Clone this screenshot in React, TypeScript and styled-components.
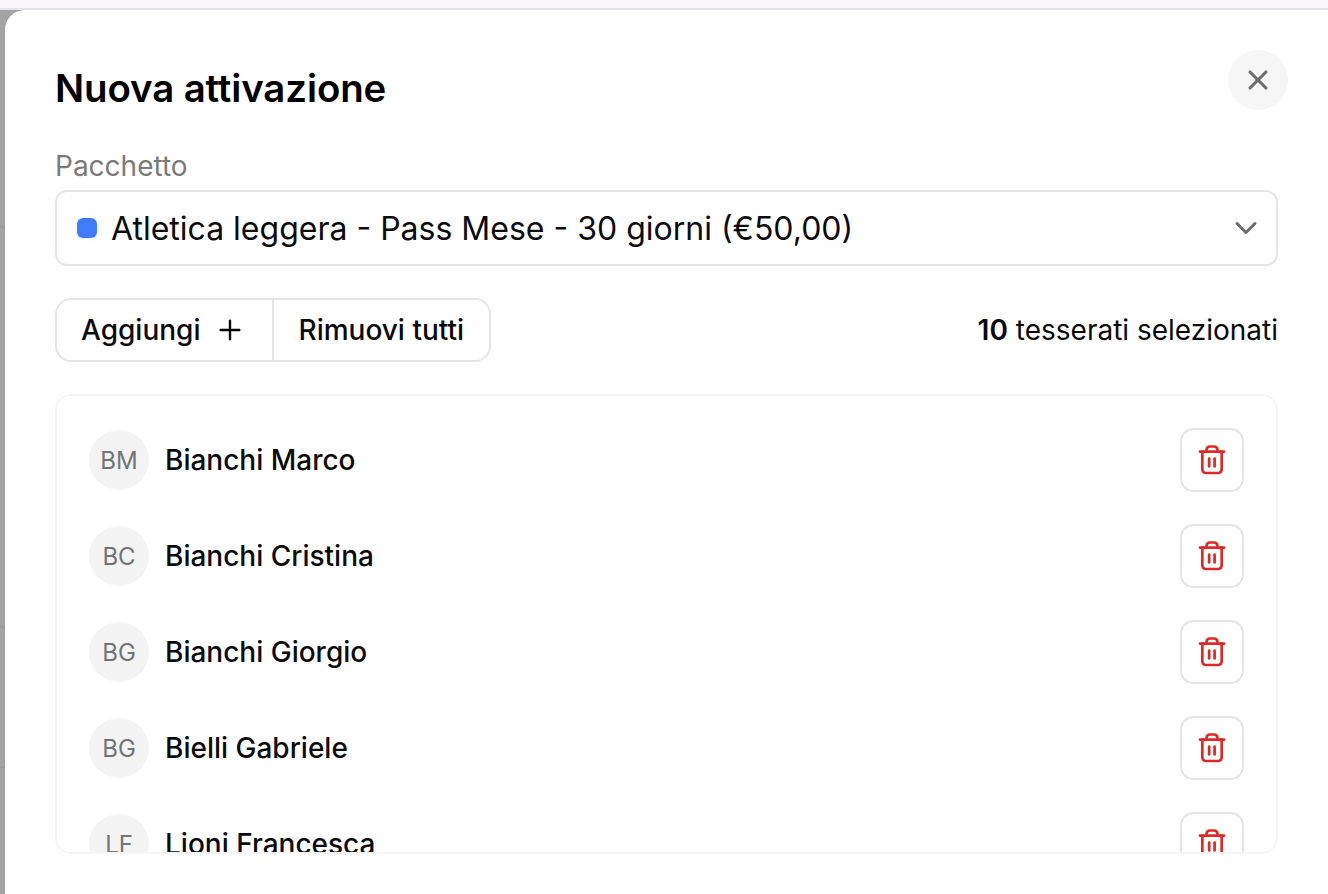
import React from "react";
import styled, { createGlobalStyle } from "styled-components";
import { ChevronDown, Plus, X } from "lucide-react";

const members = [
  { initials: "BM", name: "Bianchi Marco" },
  { initials: "BC", name: "Bianchi Cristina" },
  { initials: "BG", name: "Bianchi Giorgio" },
  { initials: "BG", name: "Bielli Gabriele" },
  { initials: "LF", name: "Lioni Francesca" },
];

const GlobalStyle = createGlobalStyle`
  html, body {
    margin: 0;
    height: 100%;
    overflow: hidden;
    background: #a3a3a3;
    font-family: Inter, "Liberation Sans", sans-serif;
    color: #0a0a0a;
  }
`;

const Page = styled.div`
  height: 894px;
  display: flex;
  flex-direction: column;
  overflow: hidden;
`;

const TopStrip = styled.div`
  height: 8px;
  background: #fbf5fd;
  border-bottom: 2px solid #e6e1e8;
  flex: none;
`;

/* the dimmed table behind the modal only shows as faint row lines */
const Backdrop = styled.div`
  flex: 1;
  display: flex;
  padding-left: 5px;
  min-height: 0;
  background:
    linear-gradient(#999, #999) 0 216px / 100% 2px no-repeat,
    linear-gradient(#999, #999) 0 616px / 100% 2px no-repeat,
    linear-gradient(#999, #999) 0 756px / 100% 2px no-repeat,
    #a3a3a3;
`;

const Modal = styled.div`
  position: relative;
  flex: 1;
  background: #fff;
  border-radius: 20px 0 0 0;
  padding: 50px 50px 0;
  overflow: hidden;
`;

const Title = styled.h2`
  margin: 0;
  font-size: 38.4px;
  line-height: 56px;
  font-weight: 600;
  letter-spacing: -0.1px;
  color: #000;
`;

const CloseButton = styled.button`
  position: absolute;
  top: 40px;
  right: 40px;
  width: 60px;
  height: 60px;
  border: 0;
  border-radius: 50%;
  background: #f5f5f5;
  color: #6b6b6b;
  display: flex;
  align-items: center;
  justify-content: center;
  padding: 0;
`;

const Label = styled.div`
  margin-top: 32px;
  font-size: 28px;
  line-height: 36px;
  color: #7a7a7a;
`;

const Select = styled.div`
  margin-top: 6px;
  height: 76px;
  box-sizing: border-box;
  border: 2px solid #e5e5e5;
  border-radius: 12px;
  display: flex;
  align-items: center;
  padding: 0 12px 0 20px;
  font-size: 32px;
  color: #0a0a0a;
`;

const Dot = styled.span`
  width: 20px;
  height: 20px;
  border-radius: 6px;
  background: #3f7bfa;
  margin-right: 14px;
  box-shadow: 0 1px 3px rgba(63, 123, 250, 0.15);
  flex: none;
`;

const SelectText = styled.span`
  flex: 1;
`;

const Toolbar = styled.div`
  margin-top: 32px;
  display: flex;
  align-items: center;
  justify-content: space-between;
`;

const ButtonGroup = styled.div`
  display: flex;
  height: 64px;
  box-sizing: border-box;
  border: 2px solid #e5e5e5;
  border-radius: 16px;
`;

const GroupButton = styled.div<{ $divider?: boolean }>`
  display: flex;
  align-items: center;
  gap: 14px;
  padding: ${(p) => (p.$divider ? "0 25px 0 24px" : "0 26px 0 24px")};
  font-size: 28px;
  font-weight: 450;
  color: #0a0a0a;
  border-left: ${(p) => (p.$divider ? "2px solid #e5e5e5" : "0")};
`;

const Count = styled.div`
  font-size: 28px;
  color: #0a0a0a;
  b {
    font-weight: 600;
  }
`;

const ListCard = styled.div`
  margin-top: 32px;
  height: 460px;
  box-sizing: border-box;
  border: 2px solid #f5f5f5;
  border-radius: 16px;
  overflow: hidden;
  padding: 16px 32px 0;
`;

const Row = styled.div`
  height: 96px;
  display: flex;
  align-items: center;
  gap: 16px;
`;

const Avatar = styled.div`
  width: 60px;
  height: 60px;
  border-radius: 50%;
  background: #f3f3f3;
  color: #737373;
  font-size: 24px;
  display: flex;
  align-items: center;
  justify-content: center;
  flex: none;
`;

const Name = styled.div`
  flex: 1;
  font-size: 28px;
  font-weight: 450;
  color: #0a0a0a;
`;

const DeleteButton = styled.div`
  width: 64px;
  height: 64px;
  box-sizing: border-box;
  border: 2px solid #e5e5e5;
  border-radius: 14px;
  display: flex;
  align-items: center;
  justify-content: center;
  color: #dc2a26;
  flex: none;
`;

function TrashIcon() {
  return (
    <svg width="32" height="32" viewBox="0 0 32 32" fill="none" stroke="currentColor" strokeWidth="2.7" strokeLinecap="round" strokeLinejoin="round">
      <path d="M4 7.7h24" />
      <path d="M10.5 7.5V6A3.5 3.5 0 0 1 14 2.5h4A3.5 3.5 0 0 1 21.5 6v1.5" />
      <path d="M6.3 7.7V25.5A3.5 3.5 0 0 0 9.8 29h12.4a3.5 3.5 0 0 0 3.5-3.5V7.7" />
      <path d="M13.2 14.5v8" />
      <path d="M18.6 14.5v8" />
    </svg>
  );
}

export default function App() {
  return (
    <Page>
      <GlobalStyle />
      <TopStrip />
      <Backdrop>
        <Modal>
          <Title>Nuova attivazione</Title>
          <CloseButton>
            <X size={32} strokeWidth={2.3} />
          </CloseButton>
          <Label>Pacchetto</Label>
          <Select>
            <Dot />
            <SelectText>Atletica leggera - Pass Mese - 30 giorni (€50,00)</SelectText>
            <ChevronDown size={36} strokeWidth={2} color="#6b6b6b" />
          </Select>
          <Toolbar>
            <ButtonGroup>
              <GroupButton>
                Aggiungi
                <Plus size={32} strokeWidth={1.8} />
              </GroupButton>
              <GroupButton $divider>Rimuovi tutti</GroupButton>
            </ButtonGroup>
            <Count>
              <b>10</b> tesserati selezionati
            </Count>
          </Toolbar>
          <ListCard>
            {members.map((m) => (
              <Row key={m.name}>
                <Avatar>{m.initials}</Avatar>
                <Name>{m.name}</Name>
                <DeleteButton>
                  <TrashIcon />
                </DeleteButton>
              </Row>
            ))}
          </ListCard>
        </Modal>
      </Backdrop>
    </Page>
  );
}
